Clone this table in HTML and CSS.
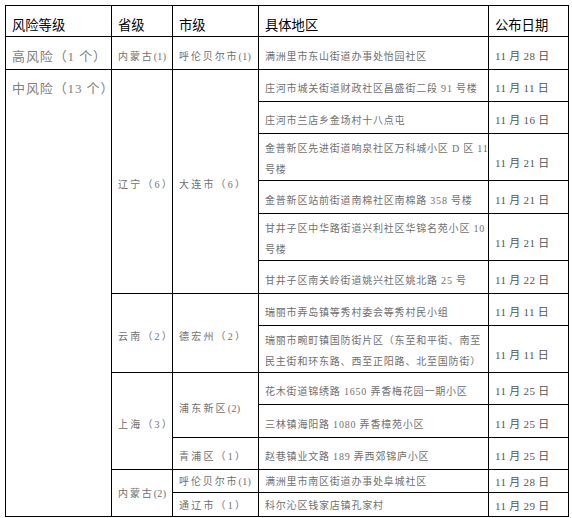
FILE: index.html
```html
<!DOCTYPE html>
<html lang="zh-CN">
<head>
<meta charset="utf-8">
<title>风险地区</title>
<link rel="stylesheet" href="styles.css">
</head>
<body>
<table class="risk">
  <colgroup>
    <col class="c1"><col class="c2"><col class="c3"><col class="c4"><col class="c5">
  </colgroup>
  <thead>
    <tr class="r31"><th>风险等级</th><th>省级</th><th>市级</th><th>具体地区</th><th>公布日期</th></tr>
  </thead>
  <tbody>
    <tr class="r33">
      <td class="level">高风险（1 个）</td>
      <td class="prov small">内蒙古<span class="np">(1)</span></td>
      <td class="city small">呼伦贝尔市<span class="np">(1)</span></td>
      <td class="area">满洲里市东山街道办事处怡园社区</td>
      <td class="date">11 月 28 日</td>
    </tr>
    <tr class="r32">
      <td class="level top" rowspan="13">中风险（13 个）</td>
      <td class="prov" rowspan="6">辽宁（6）</td>
      <td class="city" rowspan="6">大连市（6）</td>
      <td class="area">庄河市城关街道财政社区昌盛街二段 91 号楼</td>
      <td class="date">11 月 11 日</td>
    </tr>
    <tr class="r32">
      <td class="area">庄河市兰店乡金场村十八点屯</td>
      <td class="date">11 月 16 日</td>
    </tr>
    <tr class="r46 two">
      <td class="area">金普新区先进街道响泉社区万科城小区 D 区 11<br>号楼</td>
      <td class="date">11 月 21 日</td>
    </tr>
    <tr class="r33">
      <td class="area">金普新区站前街道南棉社区南棉路 358 号楼</td>
      <td class="date">11 月 21 日</td>
    </tr>
    <tr class="r45 two">
      <td class="area">甘井子区中华路街道兴利社区华锦名苑小区 10<br>号楼</td>
      <td class="date">11 月 21 日</td>
    </tr>
    <tr class="r33">
      <td class="area">甘井子区南关岭街道姚兴社区姚北路 25 号</td>
      <td class="date">11 月 22 日</td>
    </tr>
    <tr class="r32">
      <td class="prov" rowspan="2">云南（2）</td>
      <td class="city" rowspan="2">德宏州（2）</td>
      <td class="area">瑞丽市弄岛镇等秀村委会等秀村民小组</td>
      <td class="date">11 月 11 日</td>
    </tr>
    <tr class="r46 two">
      <td class="area">瑞丽市畹町镇国防街片区（东至和平街、南至<br>民主街和环东路、西至正阳路、北至国防街）</td>
      <td class="date">11 月 11 日</td>
    </tr>
    <tr class="r32">
      <td class="prov" rowspan="3">上海（3）</td>
      <td class="city" rowspan="2">浦东新区<span class="np">(2)</span></td>
      <td class="area">花木街道锦绣路 1650 弄香梅花园一期小区</td>
      <td class="date">11 月 25 日</td>
    </tr>
    <tr class="r33">
      <td class="area">三林镇海阳路 1080 弄香樟苑小区</td>
      <td class="date">11 月 25 日</td>
    </tr>
    <tr class="r32">
      <td class="city">青浦区（1）</td>
      <td class="area">赵巷镇业文路 189 弄西郊锦庐小区</td>
      <td class="date">11 月 25 日</td>
    </tr>
    <tr class="r23">
      <td class="prov small" rowspan="2">内蒙古<span class="np">(2)</span></td>
      <td class="city small">呼伦贝尔市<span class="np">(1)</span></td>
      <td class="area">满洲里市南区街道办事处阜城社区</td>
      <td class="date">11 月 28 日</td>
    </tr>
    <tr class="r24">
      <td class="city">通辽市（1）</td>
      <td class="area">科尔沁区钱家店镇孔家村</td>
      <td class="date">11 月 29 日</td>
    </tr>
  </tbody>
</table>
</body>
</html>
```
FILE: styles.css
```css
html, body {
  margin: 0;
  padding: 0;
  background: #ffffff;
}

body {
  padding: 5px 0 0 5px;
}

.risk {
  border-collapse: collapse;
  table-layout: fixed;
  width: 563px;
  font-family: "Liberation Serif", "Noto Sans CJK SC", serif;
  color: #707070;
}

.c1 { width: 106px; }
.c2 { width: 61px; }
.c3 { width: 86px; }
.c4 { width: 230px; }
.c5 { width: 80px; }

.risk th,
.risk td {
  border: 1px solid #000;
  padding: 6px 0 0 6px;
  text-align: left;
  vertical-align: middle;
  white-space: nowrap;
  line-height: 21px;
}

.risk th {
  font-family: "Noto Sans CJK SC", sans-serif;
  font-weight: 400;
  font-size: 13.3px;
  color: #000;
  padding-top: 7px;
}

.r31 { height: 31px; }
.r23 { height: 23px; }
.r24 { height: 24px; }
.r32 { height: 32px; }
.r33 { height: 33px; }
.r45 { height: 45px; }
.r46 { height: 46px; }

.two td {
  padding-top: 4px;
}

.two .date {
  padding-top: 12px;
}

.r23 td, .r24 td {
  padding-top: 2px;
  line-height: 20px;
}

.level {
  font-size: 13px;
  letter-spacing: 0.9px;
  color: #808080;
}

.level.top {
  vertical-align: top;
  padding-top: 8px;
}

.prov,
.city {
  font-size: 10px;
  letter-spacing: 2.2px;
}

.prov {
  padding-left: 5px;
}

.small {
  letter-spacing: 1.9px;
}

.np {
  letter-spacing: 0.3px;
}

.area {
  font-size: 10px;
  letter-spacing: 0.8px;
}

.date {
  font-size: 11px;
  letter-spacing: 0.3px;
  color: #555;
}
```
